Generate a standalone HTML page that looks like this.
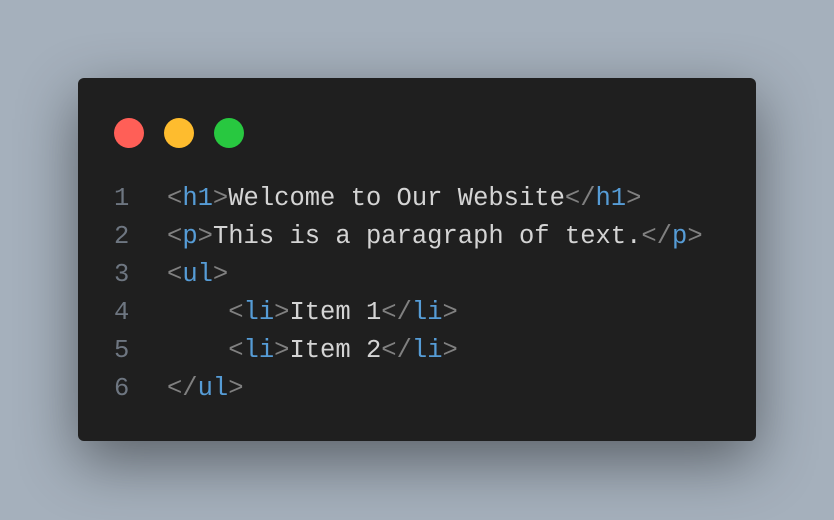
<!DOCTYPE html>
<html><head><style>
html,body{margin:0;width:834px;height:520px;overflow:hidden;background:#a5b0bc;}
.card{position:absolute;left:78px;top:78px;width:678px;height:363px;background:#1f1f1f;border-radius:6px;box-shadow:0 20px 60px rgba(0,0,0,0.45);}
.dot{position:absolute;top:40px;width:30px;height:30px;border-radius:50%;}
.code{position:absolute;left:36px;top:102px;font-family:"Liberation Mono","DejaVu Sans Mono",monospace;font-size:25.5px;line-height:38px;color:#d4d4d4;white-space:pre;}
.n{color:#6e7681;display:inline-block;width:53px;}
.t{color:#808080}.k{color:#569cd6}
</style></head><body>
<div class="card">
<div class="dot" style="left:36px;background:#ff5f57"></div>
<div class="dot" style="left:86px;background:#febc2e"></div>
<div class="dot" style="left:136px;background:#28c840"></div>
<div class="code"><span class="n">1</span><span class="t">&lt;</span><span class="k">h1</span><span class="t">&gt;</span>Welcome to Our Website<span class="t">&lt;/</span><span class="k">h1</span><span class="t">&gt;</span>
<span class="n">2</span><span class="t">&lt;</span><span class="k">p</span><span class="t">&gt;</span>This is a paragraph of text.<span class="t">&lt;/</span><span class="k">p</span><span class="t">&gt;</span>
<span class="n">3</span><span class="t">&lt;</span><span class="k">ul</span><span class="t">&gt;</span>
<span class="n">4</span>    <span class="t">&lt;</span><span class="k">li</span><span class="t">&gt;</span>Item 1<span class="t">&lt;/</span><span class="k">li</span><span class="t">&gt;</span>
<span class="n">5</span>    <span class="t">&lt;</span><span class="k">li</span><span class="t">&gt;</span>Item 2<span class="t">&lt;/</span><span class="k">li</span><span class="t">&gt;</span>
<span class="n">6</span><span class="t">&lt;/</span><span class="k">ul</span><span class="t">&gt;</span></div>
</div>
</body></html>
